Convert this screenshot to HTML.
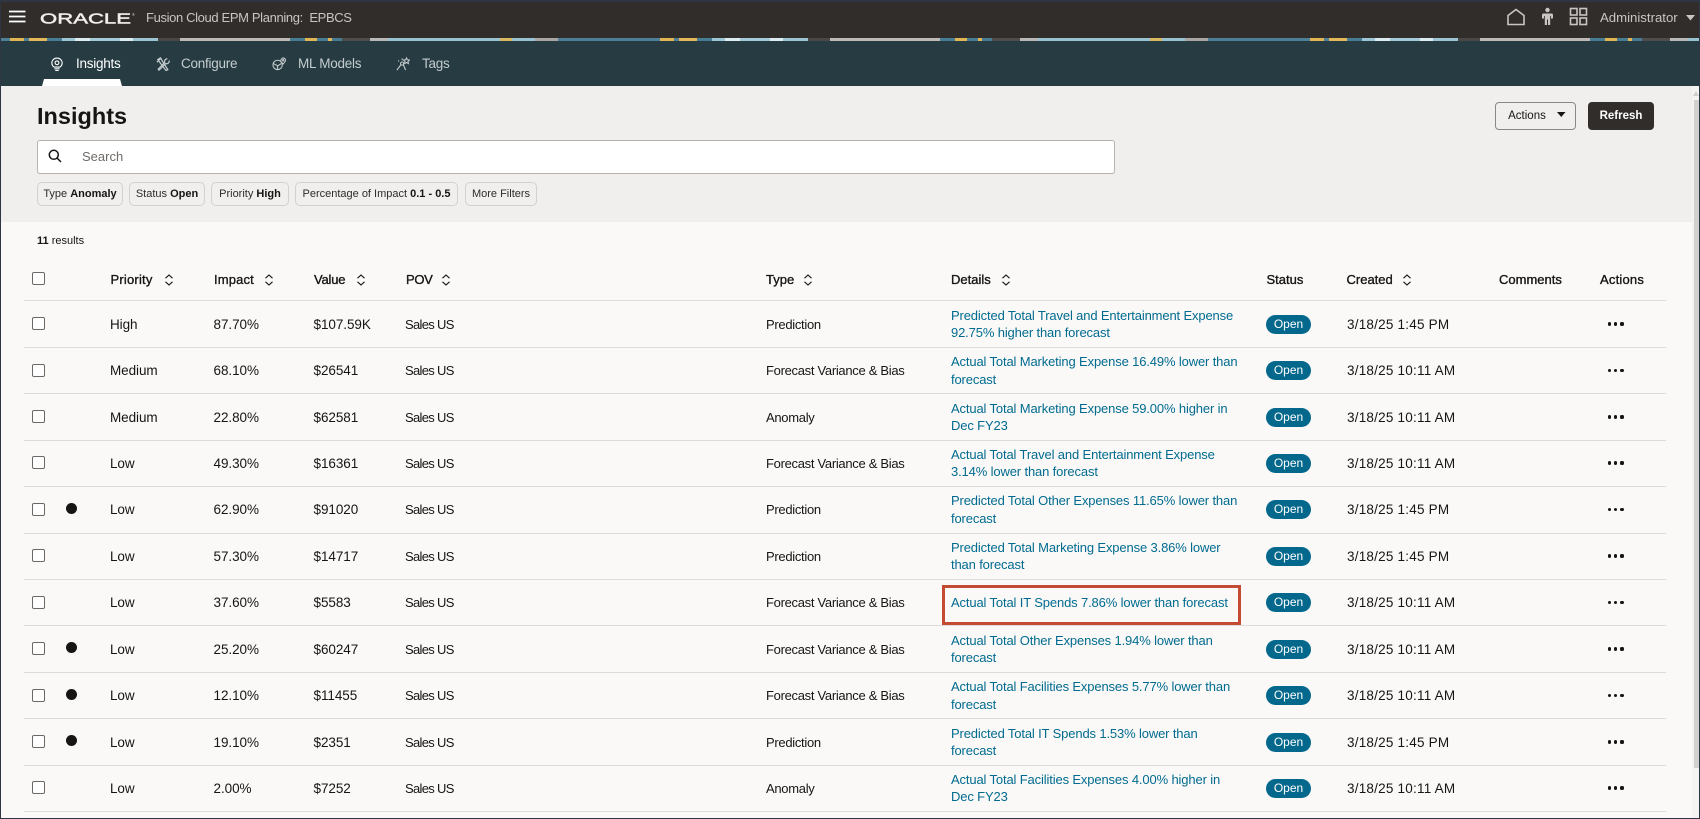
<!DOCTYPE html>
<html lang="en">
<head>
<meta charset="utf-8">
<title>Insights</title>
<style>
html,body{margin:0;padding:0;width:1700px;height:819px;overflow:hidden;background:#fbf9f8}
*{box-sizing:border-box}
body{font-family:"Liberation Sans",sans-serif;color:#161513;font-size:13.5px;position:relative}
.a{position:absolute;white-space:nowrap}
#top{left:0;top:0;width:1700px;height:38px;background:#312d2a;border-top:2px solid #2f3542}
#ban{left:0;top:38px;width:1700px;height:3px;background:repeating-linear-gradient(90deg,#4d7f96 0 10px,#e0b552 10px 24px,#4d7f96 24px 29px,#e3b85b 29px 47px,#467c94 47px 62px,#9cc6d6 62px 75px,#dcecf1 75px 90px,#a5cbd9 90px 120px,#dcecf1 120px 133px,#9cc4d3 133px 158px,#4a4847 158px 180px,#bdb9b5 180px 290px,#467c94 290px 305px,#e0b552 305px 317px,#467c94 317px 328px,#e0b552 328px 332px,#467c94 332px 342px,#4f4d4b 342px 370px,#b8b8b8 370px 388px,#98c2d2 388px 500px,#d8b860 500px 512px,#98c2d2 512px 535px,#a8a5a2 535px 558px,#4d7f96 558px 650px)}
#nav{left:0;top:41px;width:1700px;height:45px;background:#263c42}
#tabbar{left:42px;top:79px;width:80px;height:7px;background:#fff;clip-path:polygon(2px 0,78px 0,80px 100%,0 100%);border-radius:2px 2px 0 0}
#panel{left:0;top:86px;width:1700px;height:136px;background:#f1efed}
.tab{top:53px;line-height:22px;font-size:13.5px;letter-spacing:-.25px;color:#c5ccce}
.hd{top:9px;color:#c8c5c2;font-size:13.2px;line-height:18px}
h1{position:absolute;margin:0;left:37px;top:101px;font-size:23.5px;line-height:30px;font-weight:700;color:#161513}
#search{left:37px;top:140px;width:1078px;height:34px;background:#fff;border:1px solid #b5b2af;border-radius:3px}
.chip{top:182px;height:24px;line-height:23px;border:1px solid #d3d0cd;border-radius:5px;background:#f1efed;font-size:11px;text-align:center;color:#2f2c2a}
.chip b{color:#161513}
.btn{top:102px;height:28px;line-height:26px;border-radius:4px;font-size:11.5px;text-align:center}
.th{top:271px;line-height:18px;font-size:13px;font-weight:400;color:#161513;-webkit-text-stroke:.35px #161513}
.sort{position:absolute;top:274px;width:10px;height:12px}
.line{position:absolute;left:24px;width:1642px;height:1px;background:#dedcda}
.cb{position:absolute;left:32px;width:13px;height:13px;border:1.5px solid #6b6865;border-radius:2px;background:#fff}
.r{position:absolute;left:0;width:1690px}
.c{position:absolute;top:0;bottom:0;display:flex;align-items:center;white-space:nowrap}
.p{left:110px;letter-spacing:-.08px}.i{left:213.500px;letter-spacing:-.06px}.v{left:313.500px;letter-spacing:-.06px}
.o{left:405px;font-size:13px;letter-spacing:-.68px}
.t{left:766px;font-size:13px;letter-spacing:-.3px}
.d{left:951px;color:#006b8f;line-height:17.5px;font-size:13px;letter-spacing:-.14px}
.dt{left:1347px;letter-spacing:.22px}
.s{left:1266px}.s i{display:block;font-style:normal;width:45px;height:19px;border-radius:10px;background:#04688c;color:#fff;font-size:12px;line-height:19px;text-align:center}
.m{left:1608px}.m i{display:inline-block;width:3.200px;height:3.200px;border-radius:50%;background:#161513;margin-right:3px}
.box{position:absolute;left:32px;top:50%;margin-top:-7px;width:13px;height:13px;border:1.5px solid #6b6865;border-radius:2px;background:#fff}
.dot{position:absolute;left:66px;top:50%;margin-top:-7px;width:11px;height:11px;border-radius:50%;background:#161513}
#red{left:942px;top:585px;width:299px;height:40px;border:3px solid #c44a33}
#edgeL{left:0;top:0;width:1px;height:819px;background:#2f3542}
#edgeR{left:1699px;top:0;width:1px;height:819px;background:#2f3542}
#edgeB{left:0;top:818px;width:1700px;height:1px;background:#2f3542}
#track{left:1692px;top:86px;width:7px;height:732px;background:#f4f3f2}
#thumb{left:1694px;top:100px;width:5px;height:668px;background:#d2d0ce}
</style>
</head>
<body>
<div class="a" id="top"></div>
<div class="a" id="ban"></div>
<div class="a" id="nav"></div>
<div class="a" id="tabbar"></div>
<div class="a" id="panel"></div>

<svg class="a" style="left:9px;top:10px" width="17" height="13" viewBox="0 0 17 13"><path d="M0 1.5H16.5M0 6.5H16.5M0 11.5H16.5" stroke="#fff" stroke-width="1.7"/></svg>
<svg class="a" style="left:40px;top:10px" width="98" height="16" viewBox="0 0 98 16"><text x="0" y="13.5" font-family="Liberation Sans" font-size="15" fill="#f1efed" stroke="#f1efed" stroke-width=".45" textLength="91" lengthAdjust="spacingAndGlyphs">ORACLE</text><text x="92" y="6" font-size="4" fill="#d5d3d1">®</text></svg>
<div class="a hd" style="left:146px;font-size:13px;letter-spacing:-.36px">Fusion Cloud EPM Planning:&nbsp; EPBCS</div>

<svg class="a" style="left:1506px;top:8px" width="20" height="18" viewBox="0 0 20 18" fill="none" stroke="#c8c5c2" stroke-width="1.6"><path d="M2 7.5 10 1.5 18 7.5V16.5H2Z"/></svg>
<svg class="a" style="left:1541px;top:7px" width="13" height="19" viewBox="0 0 13 19" fill="#c8c5c2"><circle cx="6.5" cy="3" r="2.2"/><path d="M2.5 6.5H10.5Q12 6.5 12 8V11.5H10V9H9.2V18H7V12.5H6V18H3.8V9H3V11.5H1V8Q1 6.5 2.5 6.5Z"/></svg>
<svg class="a" style="left:1569px;top:7px" width="19" height="19" viewBox="0 0 19 19" fill="none" stroke="#c8c5c2" stroke-width="1.6"><rect x="1.5" y="1.5" width="6.5" height="6.5"/><rect x="11" y="1.5" width="6.5" height="6.5"/><rect x="1.5" y="11" width="6.5" height="6.5"/><rect x="11" y="11" width="6.5" height="6.5"/></svg>
<div class="a hd" style="left:1600px">Administrator</div>
<svg class="a" style="left:1686px;top:15px" width="9" height="6" viewBox="0 0 9 6"><path d="M0 0H9L4.500 5.500Z" fill="#c8c5c2"/></svg>

<svg class="a" style="left:51px;top:57px" width="12" height="15" viewBox="0 0 14 17" fill="none" stroke="#fff" stroke-width="1.3"><path d="M3.500 11.500C1.800 10.200 1 8.500 1 6.700 1 3.500 3.600 1 7 1s6 2.500 6 5.700c0 1.800-.8 3.500-2.500 4.800Z"/><circle cx="7" cy="6.500" r="2.200"/><path d="M4 13.500H10M5 15.500H9"/></svg>
<div class="a tab" style="left:76px;color:#fff">Insights</div>
<svg class="a" style="left:156px;top:57px" width="14" height="14" viewBox="0 0 16 16" fill="none" stroke="#c5ccce" stroke-width="1.4"><path d="M2 3 5 1 13.500 14.500 11.500 15.500ZM1 6 6 1"/><path d="M13 2A3 3 0 0 0 10 6L2.500 14 3.500 15 11 7.500A3 3 0 0 0 15 4"/></svg>
<div class="a tab" style="left:181px">Configure</div>
<svg class="a" style="left:272px;top:57px" width="14" height="14" viewBox="0 0 15 15" fill="none" stroke="#c5ccce" stroke-width="1.1"><circle cx="6" cy="8.500" r="5"/><path d="M1.500 7 6 9.500 10 7M6 9.500V13.500"/><path d="M9.500 5C9 3 10.500 1 12 1s3 1.500 2.500 3.200L12 7.500Z" fill="#263c42"/><circle cx="12" cy="3.500" r=".8"/></svg>
<div class="a tab" style="left:298px">ML Models</div>
<svg class="a" style="left:396px;top:57px" width="14" height="14" viewBox="0 0 16 16" fill="none" stroke="#c5ccce" stroke-width="1.2"><circle cx="7" cy="7.500" r="1.800"/><path d="M1 15 5.500 9M8.500 9 11 15M7 3.500V1.500M3.500 5 2.500 4"/><path d="M12 1 13 3.200 15.500 3.500 13.700 5.200 14.200 7.500 12 6.300 9.800 7.500 10.300 5.200 8.500 3.500 11 3.200Z"/></svg>
<div class="a tab" style="left:422px">Tags</div>

<h1>Insights</h1>
<div class="a btn" style="left:1495px;width:81px;background:#f1efed;border:1px solid #8a8784;padding-right:17px">Actions</div>
<svg class="a" style="left:1557px;top:112px" width="9" height="6" viewBox="0 0 9 6"><path d="M0 0H8.500L4.250 5Z" fill="#161513"/></svg>
<div class="a btn" style="left:1588px;width:66px;background:#312d2a;color:#fff;font-weight:700;line-height:28px">Refresh</div>

<div class="a" id="search"></div>
<svg class="a" style="left:48px;top:149px" width="14" height="14" viewBox="0 0 14 14" fill="none" stroke="#161513" stroke-width="1.5"><circle cx="5.800" cy="5.800" r="4.500"/><path d="M9 9 13 13"/></svg>
<div class="a" style="left:82px;top:148px;line-height:18px;font-size:13px;color:#6f6c69">Search</div>

<div class="a chip" style="left:37px;width:86px">Type <b>Anomaly</b></div>
<div class="a chip" style="left:129px;width:76px">Status <b>Open</b></div>
<div class="a chip" style="left:211px;width:78px">Priority <b>High</b></div>
<div class="a chip" style="left:295px;width:163px">Percentage of Impact <b>0.1 - 0.5</b></div>
<div class="a chip" style="left:465px;width:72px">More Filters</div>

<div class="a" style="left:37px;top:233px;line-height:16px;font-size:11px"><b>11</b> results</div>

<div class="cb" style="top:272px"></div>
<div class="a th" style="left:110.500px;letter-spacing:.2px">Priority</div>
<div class="a th" style="left:214px;letter-spacing:.15px">Impact</div>
<div class="a th" style="left:314px;letter-spacing:-.2px">Value</div>
<div class="a th" style="left:406px;letter-spacing:-.3px">POV</div>
<div class="a th" style="left:766px">Type</div>
<div class="a th" style="left:951px">Details</div>
<div class="a th" style="left:1266.500px">Status</div>
<div class="a th" style="left:1346.500px">Created</div>
<div class="a th" style="left:1499px">Comments</div>
<div class="a th" style="left:1600px;letter-spacing:.2px">Actions</div>
<svg class="sort" style="left:164px" viewBox="0 0 10 12" fill="none" stroke="#161513" stroke-width="1.100"><path d="M1.500 4.200 5 1 8.500 4.200M1.500 7.800 5 11 8.500 7.800"/></svg>
<svg class="sort" style="left:264px" viewBox="0 0 10 12" fill="none" stroke="#161513" stroke-width="1.100"><path d="M1.500 4.200 5 1 8.500 4.200M1.500 7.800 5 11 8.500 7.800"/></svg>
<svg class="sort" style="left:356px" viewBox="0 0 10 12" fill="none" stroke="#161513" stroke-width="1.100"><path d="M1.500 4.200 5 1 8.500 4.200M1.500 7.800 5 11 8.500 7.800"/></svg>
<svg class="sort" style="left:441px" viewBox="0 0 10 12" fill="none" stroke="#161513" stroke-width="1.100"><path d="M1.500 4.200 5 1 8.500 4.200M1.500 7.800 5 11 8.500 7.800"/></svg>
<svg class="sort" style="left:803px" viewBox="0 0 10 12" fill="none" stroke="#161513" stroke-width="1.100"><path d="M1.500 4.200 5 1 8.500 4.200M1.500 7.800 5 11 8.500 7.800"/></svg>
<svg class="sort" style="left:1001px" viewBox="0 0 10 12" fill="none" stroke="#161513" stroke-width="1.100"><path d="M1.500 4.200 5 1 8.500 4.200M1.500 7.800 5 11 8.500 7.800"/></svg>
<svg class="sort" style="left:1402px" viewBox="0 0 10 12" fill="none" stroke="#161513" stroke-width="1.100"><path d="M1.500 4.200 5 1 8.500 4.200M1.500 7.800 5 11 8.500 7.800"/></svg>

<div class="line" style="top:300px"></div>
<div class="line" style="top:347px"></div>
<div class="line" style="top:393px"></div>
<div class="line" style="top:440px"></div>
<div class="line" style="top:486px"></div>
<div class="line" style="top:533px"></div>
<div class="line" style="top:579px"></div>
<div class="line" style="top:625px"></div>
<div class="line" style="top:672px"></div>
<div class="line" style="top:718px"></div>
<div class="line" style="top:765px"></div>
<div class="line" style="top:811px"></div>

<div class="r" style="top:301px;height:46px"><div class="box"></div><span class="c p">High</span><span class="c i">87.70%</span><span class="c v">$107.59K</span><span class="c o">Sales US</span><span class="c t">Prediction</span><span class="c d"><span>Predicted Total Travel and Entertainment Expense<br>92.75% higher than forecast</span></span><span class="c s"><i>Open</i></span><span class="c dt">3/18/25 1:45 PM</span><span class="c m"><i></i><i></i><i></i></span></div>
<div class="r" style="top:348px;height:45px"><div class="box"></div><span class="c p">Medium</span><span class="c i">68.10%</span><span class="c v">$26541</span><span class="c o">Sales US</span><span class="c t">Forecast Variance &amp; Bias</span><span class="c d"><span>Actual Total Marketing Expense 16.49% lower than<br>forecast</span></span><span class="c s"><i>Open</i></span><span class="c dt">3/18/25 10:11 AM</span><span class="c m"><i></i><i></i><i></i></span></div>
<div class="r" style="top:394px;height:46px"><div class="box"></div><span class="c p">Medium</span><span class="c i">22.80%</span><span class="c v">$62581</span><span class="c o">Sales US</span><span class="c t">Anomaly</span><span class="c d"><span>Actual Total Marketing Expense 59.00% higher in<br>Dec FY23</span></span><span class="c s"><i>Open</i></span><span class="c dt">3/18/25 10:11 AM</span><span class="c m"><i></i><i></i><i></i></span></div>
<div class="r" style="top:441px;height:44px"><div class="box"></div><span class="c p">Low</span><span class="c i">49.30%</span><span class="c v">$16361</span><span class="c o">Sales US</span><span class="c t">Forecast Variance &amp; Bias</span><span class="c d"><span>Actual Total Travel and Entertainment Expense<br>3.14% lower than forecast</span></span><span class="c s"><i>Open</i></span><span class="c dt">3/18/25 10:11 AM</span><span class="c m"><i></i><i></i><i></i></span></div>
<div class="r" style="top:487px;height:45px"><div class="box"></div><div class="dot"></div><span class="c p">Low</span><span class="c i">62.90%</span><span class="c v">$91020</span><span class="c o">Sales US</span><span class="c t">Prediction</span><span class="c d"><span>Predicted Total Other Expenses 11.65% lower than<br>forecast</span></span><span class="c s"><i>Open</i></span><span class="c dt">3/18/25 1:45 PM</span><span class="c m"><i></i><i></i><i></i></span></div>
<div class="r" style="top:534px;height:44px"><div class="box"></div><span class="c p">Low</span><span class="c i">57.30%</span><span class="c v">$14717</span><span class="c o">Sales US</span><span class="c t">Prediction</span><span class="c d"><span>Predicted Total Marketing Expense 3.86% lower<br>than forecast</span></span><span class="c s"><i>Open</i></span><span class="c dt">3/18/25 1:45 PM</span><span class="c m"><i></i><i></i><i></i></span></div>
<div class="r" style="top:580px;height:45px"><div class="box"></div><span class="c p">Low</span><span class="c i">37.60%</span><span class="c v">$5583</span><span class="c o">Sales US</span><span class="c t">Forecast Variance &amp; Bias</span><span class="c d">Actual Total IT Spends 7.86% lower than forecast</span><span class="c s"><i>Open</i></span><span class="c dt">3/18/25 10:11 AM</span><span class="c m"><i></i><i></i><i></i></span></div>
<div class="r" style="top:626px;height:46px"><div class="box"></div><div class="dot"></div><span class="c p">Low</span><span class="c i">25.20%</span><span class="c v">$60247</span><span class="c o">Sales US</span><span class="c t">Forecast Variance &amp; Bias</span><span class="c d"><span>Actual Total Other Expenses 1.94% lower than<br>forecast</span></span><span class="c s"><i>Open</i></span><span class="c dt">3/18/25 10:11 AM</span><span class="c m"><i></i><i></i><i></i></span></div>
<div class="r" style="top:673px;height:45px"><div class="box"></div><div class="dot"></div><span class="c p">Low</span><span class="c i">12.10%</span><span class="c v">$11455</span><span class="c o">Sales US</span><span class="c t">Forecast Variance &amp; Bias</span><span class="c d"><span>Actual Total Facilities Expenses 5.77% lower than<br>forecast</span></span><span class="c s"><i>Open</i></span><span class="c dt">3/18/25 10:11 AM</span><span class="c m"><i></i><i></i><i></i></span></div>
<div class="r" style="top:719px;height:46px"><div class="box"></div><div class="dot"></div><span class="c p">Low</span><span class="c i">19.10%</span><span class="c v">$2351</span><span class="c o">Sales US</span><span class="c t">Prediction</span><span class="c d"><span>Predicted Total IT Spends 1.53% lower than<br>forecast</span></span><span class="c s"><i>Open</i></span><span class="c dt">3/18/25 1:45 PM</span><span class="c m"><i></i><i></i><i></i></span></div>
<div class="r" style="top:766px;height:44px"><div class="box"></div><span class="c p">Low</span><span class="c i">2.00%</span><span class="c v">$7252</span><span class="c o">Sales US</span><span class="c t">Anomaly</span><span class="c d"><span>Actual Total Facilities Expenses 4.00% higher in<br>Dec FY23</span></span><span class="c s"><i>Open</i></span><span class="c dt">3/18/25 10:11 AM</span><span class="c m"><i></i><i></i><i></i></span></div>

<div class="a" id="red"></div>

<div class="a" id="track"></div>
<div class="a" id="thumb"></div>
<svg class="a" style="left:1693px;top:91px" width="6" height="5" viewBox="0 0 6 5"><path d="M0 5 3 0 6 5Z" fill="#d2d0ce"/></svg>
<div class="a" id="edgeL"></div>
<div class="a" id="edgeR"></div>
<div class="a" id="edgeB"></div>
</body>
</html>
